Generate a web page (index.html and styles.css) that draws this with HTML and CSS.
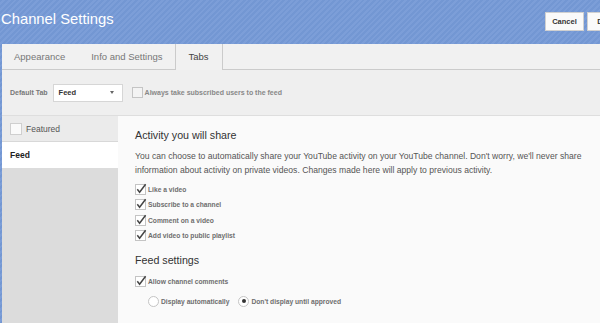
FILE: index.html
```html
<!DOCTYPE html>
<html>
<head>
<meta charset="utf-8">
<title>Channel Settings</title>
<link rel="stylesheet" href="styles.css">
</head>
<body>
<div class="page">
  <header class="header">
    <h1 class="title">Channel Settings</h1>
    <div class="actions">
      <button class="btn">Cancel</button>
      <button class="btn">Done</button>
    </div>
  </header>
  <div class="panel">
    <nav class="tabs">
      <span class="tab">Appearance</span>
      <span class="tab">Info and Settings</span>
      <span class="tab active">Tabs</span>
    </nav>
    <div class="toolbar">
      <span class="tool-label">Default Tab</span>
      <span class="select">Feed<span class="caret"></span></span>
      <span class="cb-row tool-cb"><span class="cb"></span><span class="tool-text">Always take subscribed users to the feed</span></span>
    </div>
    <div class="body">
      <aside class="sidebar">
        <div class="side-item featured"><span class="cb side-cb"></span>Featured</div>
        <div class="side-item current">Feed</div>
      </aside>
      <main class="content">
        <h2 class="heading">Activity you will share</h2>
        <p class="para">You can choose to automatically share your YouTube activity on your YouTube channel. Don't worry, we'll never share information about activity on private videos. Changes made here will apply to previous activity.</p>
        <ul class="checks">
          <li class="cb-row"><span class="cb"><svg viewBox="0 0 11 11" width="11" height="11"><path d="M2.3 5.3 L4.6 8.2 L10.6 0.3" /></svg></span>Like a video</li>
          <li class="cb-row"><span class="cb"><svg viewBox="0 0 11 11" width="11" height="11"><path d="M2.3 5.3 L4.6 8.2 L10.6 0.3" /></svg></span>Subscribe to a channel</li>
          <li class="cb-row"><span class="cb"><svg viewBox="0 0 11 11" width="11" height="11"><path d="M2.3 5.3 L4.6 8.2 L10.6 0.3" /></svg></span>Comment on a video</li>
          <li class="cb-row"><span class="cb"><svg viewBox="0 0 11 11" width="11" height="11"><path d="M2.3 5.3 L4.6 8.2 L10.6 0.3" /></svg></span>Add video to public playlist</li>
        </ul>
        <h2 class="heading heading2">Feed settings</h2>
        <ul class="checks checks2">
          <li class="cb-row"><span class="cb"><svg viewBox="0 0 11 11" width="11" height="11"><path d="M2.3 5.3 L4.6 8.2 L10.6 0.3" /></svg></span>Allow channel comments</li>
        </ul>
        <div class="radios">
          <span class="radio-row"><span class="radio"></span>Display automatically</span>
          <span class="radio-row"><span class="radio on"></span>Don't display until approved</span>
        </div>
      </main>
    </div>
  </div>
</div>
</body>
</html>
```
FILE: styles.css
```css
html, body {
  margin: 0;
  padding: 0;
}
body {
  width: 600px;
  height: 323px;
  overflow: hidden;
  font-family: "Liberation Sans", Arial, sans-serif;
  background: #7397d3 repeating-linear-gradient(135deg, #7397d3 0, #7397d3 2px, #7c9ed8 2px, #7c9ed8 4px);
}
.page {
  width: 600px;
  height: 323px;
  display: flex;
  flex-direction: column;
}
.header {
  height: 44px;
  display: flex;
  align-items: flex-start;
  justify-content: space-between;
  flex: none;
}
.title {
  margin: 10px 0 0 1px;
  font-size: 14.8px;
  font-weight: normal;
  color: #fff;
  line-height: 18px;
}
.actions {
  display: flex;
  gap: 3px;
  margin-top: 12px;
  margin-right: -26px;
}
.btn {
  height: 19px;
  width: 39px;
  padding: 0;
  border: 1px solid #d0d0d0;
  background: #fafafa;
  font-family: "Liberation Sans", Arial, sans-serif;
  font-weight: bold;
  font-size: 7.5px;
  color: #333;
}
.panel {
  margin-left: 2px;
  flex: 1;
  display: flex;
  flex-direction: column;
  background: #efefef;
}
.tabs {
  height: 25px;
  display: flex;
  background: #f1f1f1;
  border-bottom: 1px solid #cbcbcb;
  flex: none;
}
.tab {
  padding: 0 13px;
  font-size: 9.5px;
  color: #777;
  line-height: 25px;
}
.tab:first-child {
  margin-left: -1px;
}
.tab.active {
  color: #444;
  border-left: 1px solid #cbcbcb;
  border-right: 1px solid #cbcbcb;
  background: #f1f1f1;
  margin-bottom: -1px;
  height: 26px;
  margin-left: -1px;
}
.toolbar {
  height: 45px;
  flex: none;
  display: flex;
  align-items: center;
  padding-left: 8px;
  border-bottom: 1px solid #dedede;
  background: #efefef;
}
.tool-label {
  font-size: 7px;
  font-weight: bold;
  color: #777;
  margin-right: 5px;
}
.select {
  width: 63px;
  height: 16px;
  border: 1px solid #d6d6d6;
  background: #fff;
  display: flex;
  align-items: center;
  padding-left: 5px;
  font-size: 7.5px;
  font-weight: bold;
  color: #333;
}
.caret {
  margin-left: auto;
  margin-right: 8px;
  width: 0;
  height: 0;
  border-left: 2.5px solid transparent;
  border-right: 2.5px solid transparent;
  border-top: 3px solid #666;
}
.cb-row {
  display: flex;
  align-items: center;
}
.tool-cb {
  margin-left: 9px;
}
.tool-text {
  font-size: 7px;
  font-weight: bold;
  color: #888;
}
.cb {
  width: 9px;
  height: 9px;
  border: 1px solid #c4c4c4;
  background: #fff;
  margin-right: 2px;
  flex: none;
  display: flex;
}
.tool-cb .cb {
  background: #f3f3f3;
}
.cb svg {
  overflow: visible;
  margin: -1px 0 0 -1px;
}
.cb path {
  fill: none;
  stroke: #444;
  stroke-width: 1.5;
}
.body {
  flex: 1;
  display: flex;
}
.sidebar {
  width: 116px;
  background: #dcdcdc;
  flex: none;
}
.side-item {
  height: 26px;
  display: flex;
  align-items: center;
  padding-left: 8px;
  font-size: 8.5px;
  box-sizing: border-box;
}
.featured {
  background: #ebebeb;
  color: #555;
  border-bottom: 1px solid #d8d8d8;
}
.side-cb {
  width: 10px;
  height: 10px;
  background: #fafafa;
  border-color: #cfcfcf;
  margin-right: 4px;
}
.current {
  background: #fff;
  font-weight: bold;
  color: #222;
}
.content {
  flex: 1;
  background: #fafafa;
  padding: 12px 0 0 17px;
}
.heading {
  margin: 0;
  font-size: 10.7px;
  font-weight: normal;
  color: #333;
  line-height: 14px;
}
.para {
  margin: 7px 0 0;
  font-size: 8.6px;
  line-height: 14px;
  color: #555;
  width: 460px;
}
.checks {
  list-style: none;
  margin: 5px 0 0;
  padding: 0;
}
.checks li {
  height: 15.33px;
  font-size: 6.7px;
  font-weight: bold;
  color: #6e6e6e;
}
.heading2 {
  margin-top: 10px;
}
.checks2 {
  margin-top: 7px;
}
.radios {
  margin: 4px 0 0 13px;
  display: flex;
  gap: 9px;
  height: 15px;
}
.radio-row {
  display: flex;
  align-items: center;
  font-size: 6.7px;
  font-weight: bold;
  color: #6e6e6e;
}
.radio {
  width: 9px;
  height: 9px;
  border: 1px solid #c4c4c4;
  border-radius: 50%;
  background: #fff;
  margin-right: 2px;
  display: flex;
  align-items: center;
  justify-content: center;
}
.radio.on::after {
  content: "";
  width: 4px;
  height: 4px;
  border-radius: 50%;
  background: #333;
}
```
